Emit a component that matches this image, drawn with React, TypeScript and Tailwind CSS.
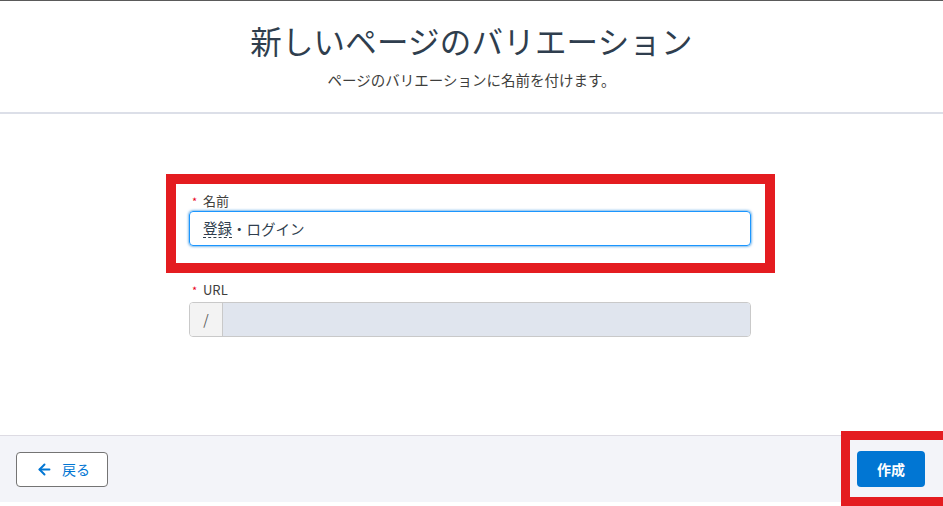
import { ArrowLeft } from "lucide-react";

const font = { fontFamily: '"Noto Sans CJK JP", "Noto Sans", sans-serif' };

function Label({ text }: { text: string }) {
  return (
    <div className="flex items-center h-[18px] text-[13px] text-[#3e3e3c]">
      <span className="text-[#ea001e] text-[11px] w-[14px] pl-[3px] leading-none">*</span>
      <span>{text}</span>
    </div>
  );
}

export default function App() {
  return (
    <div className="relative w-full h-[506px] bg-white flex flex-col overflow-hidden" style={font}>
      <header className="h-[114px] border-t border-[#5a5a5a] border-b-2 border-b-[#dcdfe8] flex flex-col items-center shrink-0">
        <h1 className="mt-[17px] text-[31.5px] leading-[44px] text-[#2f3e4e] font-normal tracking-[0.2px]">新しいページのバリエーション</h1>
        <p className="mt-[8px] text-[14.5px] leading-[20px] text-[#3e3e3c]">ページのバリエーションに名前を付けます。</p>
      </header>

      <main className="flex-1 flex justify-center pr-[3px]">
        <div className="w-[562px] pt-[78px]">
          <Label text="名前" />
          <div className="mt-[1px] h-[35px] rounded-[4px] border border-[#1b96ff] shadow-[0_0_3px_#0176d3] flex items-center px-[13px] text-[14.5px] text-[#2f3e4e]">
            <span className="border-b border-dashed border-[#2f3e4e] leading-[18px]">登録</span>
            <span>・ログイン</span>
          </div>

          <div className="mt-[35px]">
            <Label text="URL" />
          </div>
          <div className="mt-[3px] h-[35px] rounded-[4px] border border-[#c9c9c9] flex overflow-hidden">
            <div className="w-[33px] bg-[#f3f3f3] border-r border-[#c9c9c9] flex items-center justify-center text-[14px] text-[#5c5c5c]">/</div>
            <div className="flex-1 bg-[#e0e5ee]" />
          </div>
        </div>
      </main>

      <footer className="h-[67px] border-t border-[#dddbe3] bg-[#f3f4f9] flex items-center justify-between px-[16px] mb-[4px] shrink-0">
        <button className="h-[35px] w-[92px] rounded-[4px] border border-[#747474] bg-white flex items-center justify-center gap-[9px] pl-[2px] text-[#0176d3] text-[14px]">
          <ArrowLeft size={17} strokeWidth={2.75} />
          <span>戻る</span>
        </button>
        <button className="h-[36px] w-[68px] mr-[2px] rounded-[4px] bg-[#0176d3] text-white text-[14px] font-bold">作成</button>
      </footer>

      <div className="absolute left-[166px] top-[174px] w-[609px] h-[99px] border-[10px] border-[#e41c20] pointer-events-none" />
      <div className="absolute left-[841px] top-[431px] w-[102px] h-[75px] border-[9px] border-r-0 border-[#e41c20] pointer-events-none" />
    </div>
  );
}
